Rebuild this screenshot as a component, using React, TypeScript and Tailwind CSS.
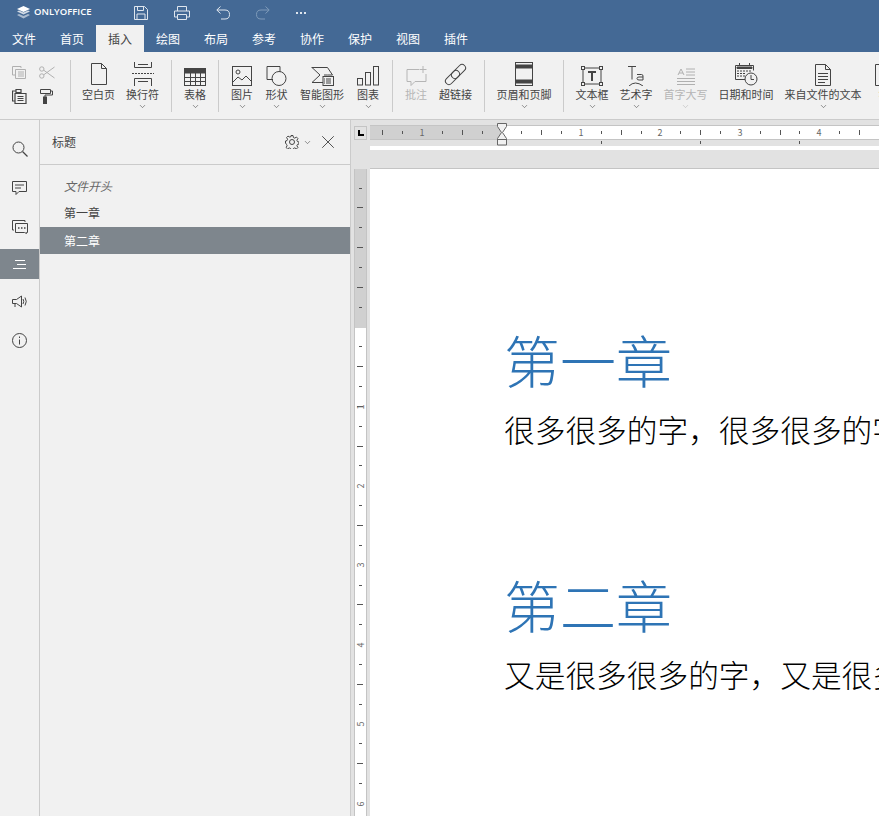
import type { ReactNode } from "react";
import { ChevronDown, X } from "lucide-react";

const font = { fontFamily: '"Noto Sans CJK SC", "Noto Sans", sans-serif' };

function Svg({ w, h, children, className }: { w: number; h: number; children: ReactNode; className?: string }) {
  return (
    <svg width={w} height={h} viewBox={`0 0 ${w} ${h}`} fill="none" stroke="currentColor" strokeWidth={1} className={className}>
      {children}
    </svg>
  );
}

const IconBlank = () => (
  <Svg w={18} h={24}><path d="M1.500 1.500h10l5 5v16h-15z M11.500 1.500v5h5" /></Svg>
);
const IconBreak = () => (
  <Svg w={22} h={24}>
    <path d="M2.500 0v5.500h17V0 M6 2.500h10 M2.500 24v-7.500h17V24 M6 19.500h10" />
    <path d="M0 11.500h22" strokeDasharray="2 1" />
  </Svg>
);
const IconTable = () => (
  <Svg w={22} h={18}>
    <rect x="0.500" y="0.500" width="21" height="17" />
    <rect x="0" y="0" width="22" height="5" fill="currentColor" />
    <path d="M0 9.500h22 M0 13.500h22 M6.500 5v13 M11.500 5v13 M16.500 5v13" />
  </Svg>
);
const IconPicture = () => (
  <Svg w={20} h={20}>
    <rect x="0.500" y="0.500" width="19" height="19" />
    <circle cx="6" cy="6" r="2" />
    <path d="M1 16l5-5 4 3 4-4 5 5" />
  </Svg>
);
const IconShape = () => (
  <Svg w={21} h={20}>
    <path d="M7 13.500H1V0.500h13V6" />
    <circle cx="13" cy="12.500" r="7" />
  </Svg>
);
const IconSmartArt = () => (
  <Svg w={23} h={20}>
    <path d="M0.500 1.500h16l5 7.500-5 0H13 M1 1.500l8 7.500-8 7.500h11" />
    <rect x="12" y="10.500" width="10.500" height="9" fill="#f1f1f1" />
    <path d="M15 13h5 M15 15h5 M15 17h5 M13 13h1 M13 15h1 M13 17h1" />
  </Svg>
);
const IconChart = () => (
  <Svg w={23} h={20}>
    <rect x="0.500" y="12.500" width="5" height="6.500" />
    <rect x="8.500" y="6.500" width="5" height="12.500" />
    <rect x="16.500" y="0.500" width="5" height="18.500" />
  </Svg>
);
const IconComment = () => (
  <Svg w={21} h={20}>
    <path d="M13 3.500H1v12h4v4l4-4h11V8" />
    <path d="M17 0v7 M13.500 3.500h7" />
  </Svg>
);
const IconLink = () => (
  <Svg w={23} h={23}>
    <rect x="11" y="0" width="7" height="17" rx="3.500" transform="rotate(45 14.500 8.500)" />
    <rect x="5" y="6" width="7" height="17" rx="3.500" transform="rotate(45 8.500 14.500)" />
  </Svg>
);
const IconHeader = () => (
  <Svg w={18} h={24}>
    <rect x="0.500" y="0.500" width="17" height="23" />
    <rect x="1" y="3" width="16" height="3" fill="currentColor" />
    <rect x="1" y="18" width="16" height="3" fill="currentColor" />
  </Svg>
);
const IconTextBox = () => (
  <Svg w={22} h={20}>
    <rect x="2" y="2" width="18" height="16" />
    <rect x="0.500" y="0.500" width="3" height="3" fill="#f1f1f1" />
    <rect x="18.500" y="0.500" width="3" height="3" fill="#f1f1f1" />
    <rect x="0.500" y="16.500" width="3" height="3" fill="#f1f1f1" />
    <rect x="18.500" y="16.500" width="3" height="3" fill="#f1f1f1" />
    <path d="M7 6h8 M11 6v9" strokeWidth={2} />
  </Svg>
);
const IconArt = () => (
  <Svg w={17} h={20}>
    <path d="M0 0.500h8 M4 0.500v13" />
    <path d="M9 8.500h4.500q1.500 0 1.500 1.500v4 M15 11h-4q-2 0-2 1.500t2 1.500h4" />
    <path d="M1 20q6-6 14 0" />
  </Svg>
);
const IconDropCap = () => (
  <Svg w={18} h={18} className="text-[#b0b0b0]">
    <path d="M1 7l3-6 3 6 M2 5h4 M9 1h9 M9 4h9 M9 7h9 M0 10.500h18 M0 13.500h18 M0 16.500h18" />
  </Svg>
);
const IconDate = () => (
  <Svg w={23} h={23}>
    <path d="M10 16.500H0.500V2.500h18v5" />
    <path d="M2 4h15v1.500H2z" fill="currentColor" />
    <path d="M2 8h2 M5 8h2 M8 8h2 M11 8h2 M14 8h2 M2 10.500h2 M5 10.500h2 M8 10.500h2 M2 13h2 M5 13h2 M8 13h2" />
    <path d="M4.500 0v3 M14.500 0v3" />
    <circle cx="16" cy="16" r="6" fill="#f1f1f1" />
    <path d="M16 12v4.500h3" />
  </Svg>
);
const IconFile = () => (
  <Svg w={16} h={22}>
    <path d="M0.500 0.500h10l5 5v16h-15z M10.500 0.500v5h5" />
    <path d="M3 9.500h10 M3 12.500h10 M3 15.500h10 M3 18.500h7" />
  </Svg>
);

function Tool({ label, icon, caret, disabled }: { label: string; icon: ReactNode; caret?: boolean; disabled?: boolean }) {
  return (
    <div className={`flex flex-col items-center ${disabled ? "text-[#b5b5b5]" : "text-[#444444]"}`}>
      <div className="flex h-[26px] items-end">{icon}</div>
      <div className="h-[16px] whitespace-nowrap text-[11px] leading-[16px]">{label}</div>
      {caret && <ChevronDown size={9} strokeWidth={1.5} />}
    </div>
  );
}

const Sep = () => <div className="h-[52px] w-px shrink-0 bg-[#cbcbcb]" />;

const rail: { icon: ReactNode; top: string }[] = [
  { top: "mt-[14px]", icon: <Svg w={16} h={16}><circle cx="6.500" cy="6.500" r="5.500" /><path d="M10.500 10.500l5 5" strokeWidth={1.3} /></Svg> },
  { top: "mt-[9px]", icon: <Svg w={15} h={14}><path d="M0.500 0.500h14v10H7l-3 3v-3H0.500z M3 4h9 M3 7h6" /></Svg> },
  { top: "mt-[9px]", icon: <Svg w={16} h={14}><path d="M13 2V0.500H0.500V10H2" /><path d="M3.500 3.500h12v9h-1v1l-2-1h-9z" /><path d="M6 8h1.500 M9 8h1.500 M12 8h1.500" strokeWidth={1.500} /></Svg> },
  { top: "mt-[7px]", icon: <Svg w={13} h={9}><path d="M2 0.500h10 M4 4.500h9 M0 8.500h13" /></Svg> },
  { top: "mt-[7px]", icon: <Svg w={15} h={13}><path d="M0.500 4.500h4l5-3.500v11l-5-3.500h-4z M3 8.500v3.500 M11 4q1.500 2.500 0 5 M13 2.500q2.500 4 0 8" /></Svg> },
  { top: "mt-[9px]", icon: <Svg w={15} h={15}><circle cx="7.500" cy="7.500" r="7" /><path d="M7.500 6.500v5 M7.500 3.500v1.500" /></Svg> },
];

function HRuler() {
  const small = [402, 442, 482, 521, 561, 601, 641, 680, 720, 760, 799, 839];
  const mid = [382, 462, 541, 621, 700, 780, 859];
  const nums = [[422, "1"], [581, "1"], [660, "2"], [740, "3"], [819, "4"]] as const;
  return (
    <svg width={509} height={28} viewBox="370 122 509 28" className="block" style={font}>
      <rect x={370} y={126} width={132} height={14} fill="#d0d0d0" />
      <rect x={502} y={126} width={377} height={14} fill="#ffffff" />
      <path d="M370 125.500H879 M370 139.500H879" stroke="#c4c4c4" />
      {small.map((x) => <path key={x} d={`M${x + 0.5} 131v3`} stroke="#555" />)}
      {mid.map((x) => <path key={x} d={`M${x + 0.5} 130v5`} stroke="#555" />)}
      {nums.map(([x, n]) => (
        <text key={x} x={x} y={136} fontSize={9} fill="#666" textAnchor="middle">{n}</text>
      ))}
      {[601, 700, 799].map((x) => <path key={x} d={`M${x + 0.5} 141v3`} stroke="#555" />)}
      <rect x={370} y={146} width={509} height={4} fill="#ffffff" />
      <path d="M497.500 123.500h9v3l-4 6 4 6v6.500h-9v-6.500l4-6-4-6z M497.500 139.500h9" stroke="#666" fill="#f1f1f1" />
    </svg>
  );
}

function VRuler() {
  const ticks: ReactNode[] = [];
  [188, 227, 267, 307, 346, 386, 426, 465, 505, 545, 585, 624, 664, 704, 743, 783].forEach((y) =>
    ticks.push(<path key={y} d={`M359 ${y + 0.5}h3`} stroke="#555" />),
  );
  [207, 247, 287, 366, 406, 446, 525, 604, 684, 763].forEach((y) =>
    ticks.push(<path key={y} d={`M357 ${y + 0.5}h6`} stroke="#555" />),
  );
  [[486, "2"], [565, "3"], [645, "4"], [724, "5"], [804, "6"]].forEach(([y, n]) =>
    ticks.push(
      <text key={y} x={0} y={0} fontSize={9} fill="#666" textAnchor="middle" transform={`translate(364 ${y}) rotate(-90)`}>
        {n}
      </text>,
    ),
  );
  return (
    <svg width={13} height={647} viewBox="354 169 13 647" className="block" style={font}>
      <rect x={354} y={169} width={13} height={159} fill="#d0d0d0" />
      <rect x={354} y={328} width={13} height={488} fill="#ffffff" />
      <path d="M354.500 169V816 M366.500 169V816" stroke="#c4c4c4" />
      {ticks}
      <text x={0} y={0} fontSize={9} fill="#666" textAnchor="middle" transform="translate(364 407) rotate(-90)">1</text>
    </svg>
  );
}

export default function App() {
  return (
    <div className="flex h-[816px] w-[879px] flex-col overflow-hidden bg-[#e2e2e2] text-[#444444]" style={font}>
      {/* title bar */}
      <div className="flex h-[25px] shrink-0 items-center bg-[#446995] text-white">
        <div className="ml-[17px] flex w-[117px] items-center gap-[4px]">
          <svg width={13} height={13} viewBox="0 0 13 13" fill="#ffffff">
            <path d="M6.500 0L13 3 6.500 6 0 3z" />
            <path d="M0 5.500l2 -1 4.500 2 4.500-2 2 1-6.500 3z" opacity={0.75} />
            <path d="M0 9l2-1 4.500 2 4.500-2 2 1-6.500 3.500z" opacity={0.55} />
          </svg>
          <span className="text-[9.500px] font-semibold" style={{ fontFamily: '"Open Sans", sans-serif' }}>ONLYOFFICE</span>
        </div>
        <div className="flex items-center gap-[26px]">
          <Svg w={14} h={14} className="text-[#dfe6ee]"><path d="M0.500 0.500h10l3 3v10h-13z M3.500 0.500v4h6v-4 M3 13.500V8h8v5.500" /></Svg>
          <Svg w={16} h={14} className="text-[#dfe6ee]"><path d="M3.500 5V0.500h9V5 M3.500 11H0.500V5h15v6h-3 M3.500 8.500h9v5h-9z" /></Svg>
          <Svg w={14} h={14} className="text-[#dfe6ee]"><path d="M4.500 0.500L0.800 4l3.700 3.500 M1 4h8q4.500 0 4.500 4.500T9 13H5" /></Svg>
          <Svg w={14} h={14} className="text-[#7f9ab9]"><path d="M9.500 0.500L13.200 4 9.500 7.500 M13 4H5Q0.500 4 0.500 8.500T5 13h4" /></Svg>
          <div className="flex gap-[2px]">
            <div className="h-[2px] w-[2px] bg-[#dfe6ee]" />
            <div className="h-[2px] w-[2px] bg-[#dfe6ee]" />
            <div className="h-[2px] w-[2px] bg-[#dfe6ee]" />
          </div>
        </div>
      </div>

      {/* tabs */}
      <div className="flex h-[27px] shrink-0 bg-[#446995] text-[12px] text-white">
        {["文件", "首页", "插入", "绘图", "布局", "参考", "协作", "保护", "视图", "插件"].map((t) => (
          <div
            key={t}
            className={`flex w-[48px] items-center justify-center ${t === "插入" ? "bg-[#f1f1f1] text-[#444444]" : ""}`}
          >
            {t}
          </div>
        ))}
      </div>

      {/* toolbar */}
      <div className="flex h-[68px] shrink-0 items-start overflow-hidden border-b border-[#cbcbcb] bg-[#f1f1f1] pt-[8px]">
        <div className="mt-[6px] grid w-[70px] shrink-0 grid-cols-2 gap-y-[10px] pl-[12px] pr-[7px]">
          <Svg w={15} h={13} className="text-[#b0b0b0]"><path d="M9 2V0.500H0.500V9H3" /><path d="M3.500 3.500h10v9h-10z M6 6h6 M6 8h6 M6 10h6" /></Svg>
          <Svg w={16} h={13} className="ml-[1px] text-[#b0b0b0]"><path d="M4.500 4l11 8 M4.500 9l11-8" /><circle cx="2.800" cy="3" r="2.200" fill="#f1f1f1" /><circle cx="2.800" cy="10" r="2.200" fill="#f1f1f1" /></Svg>
          <Svg w={15} h={15}><path d="M4 2H0.500v10H3 M4 0.500h5v3H4z M3 4.500h11v10H3z M5.500 7.500h6 M5.500 9.500h6 M5.500 11.500h6" strokeWidth={1.200} /></Svg>
          <Svg w={13} h={15} className="ml-[2px]"><path d="M0.500 0.500h10v4h-10z M10.500 2h2v4H5v3" /><rect x="3.500" y="8" width="3" height="7" fill="currentColor" /></Svg>
        </div>
        <Sep />
        <div className="flex shrink-0 gap-[11px] pl-[11px] pr-[12px]">
          <Tool label="空白页" icon={<IconBlank />} />
          <Tool label="换行符" icon={<IconBreak />} caret />
        </div>
        <Sep />
        <div className="flex shrink-0 px-[12px]">
          <Tool label="表格" icon={<IconTable />} caret />
        </div>
        <Sep />
        <div className="flex shrink-0 gap-[12.500px] pl-[12px] pr-[12.500px]">
          <Tool label="图片" icon={<IconPicture />} caret />
          <Tool label="形状" icon={<IconShape />} caret />
          <Tool label="智能图形" icon={<IconSmartArt />} caret />
          <Tool label="图表" icon={<IconChart />} caret />
        </div>
        <Sep />
        <div className="flex shrink-0 gap-[12px] px-[12px]">
          <Tool label="批注" icon={<IconComment />} disabled />
          <Tool label="超链接" icon={<IconLink />} />
        </div>
        <Sep />
        <div className="flex shrink-0 px-[11.500px]">
          <Tool label="页眉和页脚" icon={<IconHeader />} caret />
        </div>
        <Sep />
        <div className="flex shrink-0 gap-[11px] px-[11.500px]">
          <Tool label="文本框" icon={<IconTextBox />} caret />
          <Tool label="艺术字" icon={<IconArt />} caret />
          <Tool label="首字大写" icon={<IconDropCap />} caret disabled />
          <Tool label="日期和时间" icon={<IconDate />} />
          <Tool label="来自文件的文本" icon={<IconFile />} caret />
          <div className="ml-[2px]">
            <Tool label="符号" icon={<Svg w={30} h={22}><path d="M6 0.500H0.500v21H6" /></Svg>} />
          </div>
        </div>
      </div>

      <div className="flex min-h-0 flex-1">
        {/* left rail */}
        <div className="flex w-[40px] shrink-0 flex-col border-r border-[#cbcbcb] bg-[#f1f1f1]">
          {rail.map((r, i) => (
            <div
              key={i}
              className={`flex h-[30px] items-center justify-center ${r.top} ${i === 3 ? "bg-[#7e868d] text-white" : ""}`}
            >
              {r.icon}
            </div>
          ))}
        </div>

        {/* headings panel */}
        <div className="flex w-[311px] shrink-0 flex-col border-r border-[#cbcbcb] bg-[#f1f1f1]">
          <div className="flex h-[45px] shrink-0 items-center border-b border-[#cbcbcb] pl-[12px] pr-[11px]">
            <span className="flex-1 text-[12px]">标题</span>
            <Svg w={14} h={14} className="mr-[4px]">
              <circle cx="7" cy="7" r="2.500" />
              <path d="M6 0.500h2l.4 2 1.300.6 1.800-1 1.400 1.400-1 1.800.6 1.300 1.500.4v2l-1.500.4-.6 1.300 1 1.800-1.400 1.400-1.800-1-1.300.6-.4 1.500H6l-.4-1.500-1.300-.6-1.800 1-1.400-1.400 1-1.800-.6-1.300L.500 8V6l1.500-.4.600-1.300-1-1.800 1.400-1.400 1.800 1 1.300-.6z" />
            </Svg>
            <ChevronDown size={9} strokeWidth={1.500} className="mr-[5px]" />
            <X size={22} strokeWidth={1} />
          </div>
          <div className="pt-[7px] text-[12px]">
            <div className="flex h-[27px] items-center pl-[24px] italic text-[#666666]">文件开头</div>
            <div className="flex h-[28px] items-center pl-[24px]">第一章</div>
            <div className="flex h-[27px] items-center bg-[#7e868d] pl-[24px] text-white">第二章</div>
          </div>
        </div>

        {/* document area */}
        <div className="flex min-w-0 flex-1 flex-col pt-[2px]">
          <div className="flex items-start">
            <div className="ml-[3px] mt-[4px] flex h-[14px] w-[13px] shrink-0 items-center justify-center border border-[#c4c4c4]">
              <svg width={6} height={6} viewBox="0 0 6 6" fill="#000000"><path d="M0 0h2v4h4v2H0z" /></svg>
            </div>
            <div className="ml-[3px]"><HRuler /></div>
          </div>
          <div className="flex min-h-0 flex-1 pt-[19px]">
            <div className="ml-[3px] shrink-0 self-start"><VRuler /></div>
            <div className="ml-[3px] -mt-px min-w-0 flex-1 overflow-hidden border-t border-[#c4c4c4] bg-white pl-[134px] pt-[150px] text-black">
              <div className="h-[80px] whitespace-nowrap text-[56px] font-light leading-[80px] text-[#2e74b5]">第一章</div>
              <div className="mt-[10px] h-[40px] whitespace-nowrap text-[30.700px] font-light leading-[40px]">很多很多的字，很多很多的字</div>
              <div className="mt-[115px] h-[80px] whitespace-nowrap text-[56px] font-light leading-[80px] text-[#2e74b5]">第二章</div>
              <div className="mt-[10px] h-[40px] whitespace-nowrap text-[30.700px] font-light leading-[40px]">又是很多很多的字，又是很多很多的字</div>
            </div>
          </div>
        </div>
      </div>
    </div>
  );
}
